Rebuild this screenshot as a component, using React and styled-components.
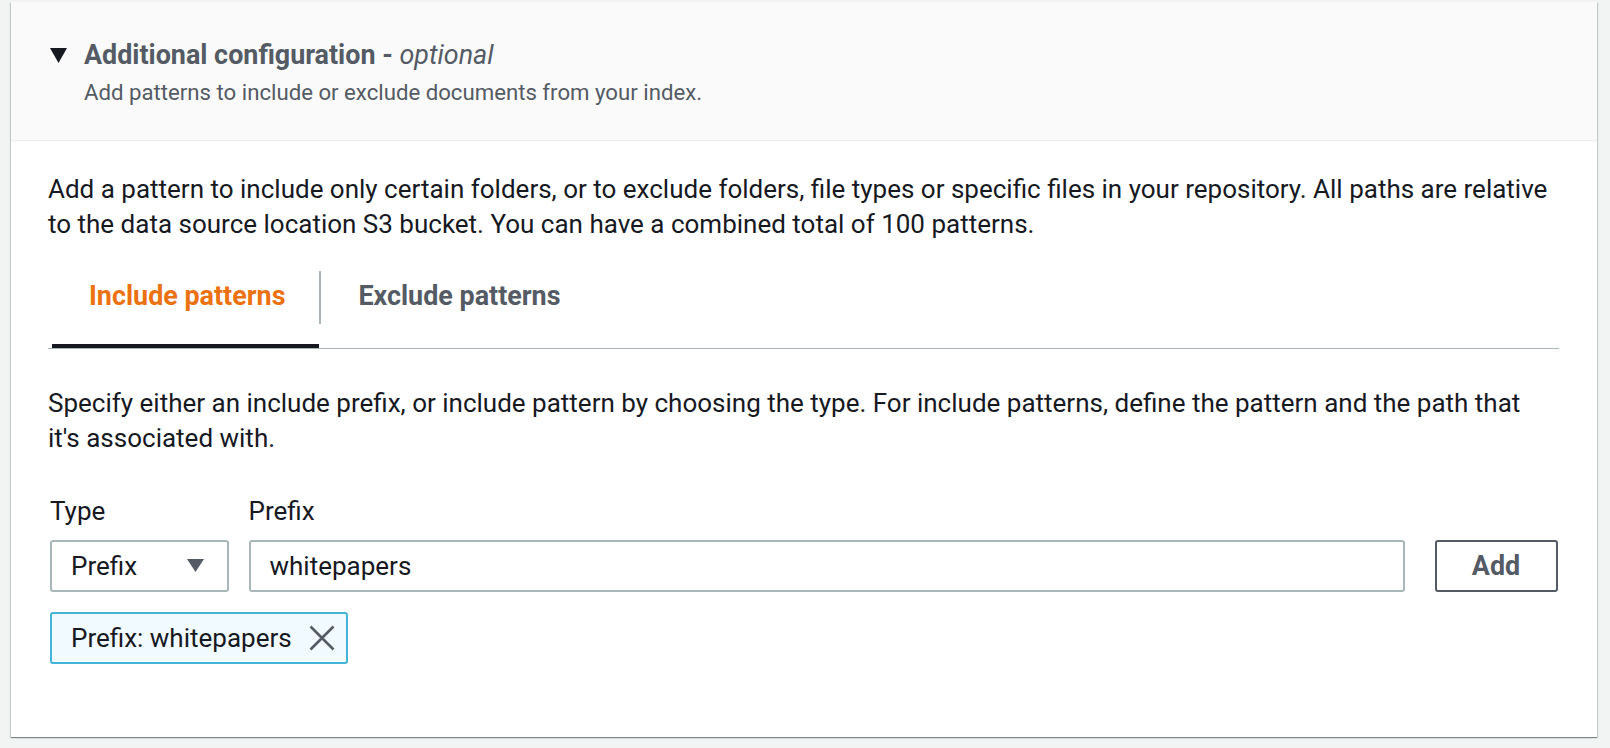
import React from 'react';
import styled, { createGlobalStyle } from 'styled-components';

const GlobalStyle = createGlobalStyle`
  html, body {
    margin: 0;
    padding: 0;
    background: #f2f3f3;
  }
  body {
    font-family: Roboto, "Liberation Sans", Arial, sans-serif;
    color: #16191f;
  }
`;

const Page = styled.div`
  padding: 2px 13px 10px 11px;
`;

const Panel = styled.section`
  background: #fff;
  box-shadow: 0 1px 1px 0 rgba(0, 28, 36, 0.3), 1px 1px 1px 0 rgba(0, 28, 36, 0.15),
    -1px 1px 1px 0 rgba(0, 28, 36, 0.15);
`;

const Header = styled.div`
  background: #fafafa;
  border-bottom: 1px solid #eaeded;
  padding: 35.5px 39px 32px;
`;

const HeaderRow = styled.div`
  display: flex;
  align-items: center;
  gap: 17px;
`;

const Title = styled.h2`
  margin: 0;
  font-size: 26.9px;
  line-height: 35px;
  font-weight: 700;
  color: #545b64;
`;

const Optional = styled.i`
  font-weight: 400;
`;

const HeaderDesc = styled.div`
  margin: 3.5px 0 0 34px;
  font-size: 22.2px;
  line-height: 32px;
  color: #545b64;
`;

const Body = styled.div`
  padding: 30.5px 38px 73px 37px;
`;

const Para = styled.p`
  margin: ${(p) => p.$top || 0}px 0 0;
  padding-right: 4px;
  font-size: 26px;
  line-height: 35px;
`;

const TabBar = styled.div`
  display: flex;
  margin-top: 29px;
  padding-left: 4px;
  border-bottom: 1px solid #aab7b8;
`;

const Tab = styled.button`
  border: none;
  background: none;
  padding: 8px 34px 30px 37px;
  border-bottom: 4px solid ${(p) => (p.$active ? '#16191f' : 'transparent')};
  font-family: inherit;
  font-size: 26.9px;
  line-height: 35px;
  font-weight: 700;
  color: ${(p) => (p.$active ? '#ec7211' : '#545b64')};
  cursor: pointer;
`;

const TabDivider = styled.span`
  align-self: flex-start;
  width: 2px;
  height: 53px;
  background: #aab7b8;
`;

const FieldRow = styled.div`
  display: flex;
  align-items: flex-end;
  gap: 19.5px;
  margin-top: 38px;
  padding: 0 1.5px 0 2px;
`;

const Field = styled.div`
  display: flex;
  flex-direction: column;
  gap: 11px;
  flex: ${(p) => (p.$grow ? 1 : 'none')};
  width: ${(p) => (p.$width ? `${p.$width}px` : 'auto')};
`;

const Label = styled.label`
  font-size: 26px;
  line-height: 35px;
`;

const Select = styled.div`
  box-sizing: border-box;
  height: 52px;
  display: flex;
  align-items: center;
  justify-content: space-between;
  padding: 0 23px 0 19px;
  border: 2px solid #aab7b8;
  border-radius: 3px;
  font-size: 26px;
`;

const Input = styled.input`
  box-sizing: border-box;
  height: 52px;
  width: 100%;
  padding: 0 19px;
  border: 2px solid #aab7b8;
  border-radius: 3px;
  font-family: inherit;
  font-size: 26px;
  color: #16191f;
  outline: none;
`;

const AddButton = styled.button`
  box-sizing: border-box;
  width: 123px;
  height: 52px;
  margin-left: 10px;
  border: 2px solid #545b64;
  border-radius: 3px;
  background: #fff;
  font-family: inherit;
  font-size: 26.9px;
  font-weight: 700;
  color: #545b64;
  cursor: pointer;
`;

const Token = styled.div`
  box-sizing: border-box;
  display: inline-flex;
  align-items: center;
  gap: 17px;
  height: 52px;
  margin: 20px 0 0 2px;
  padding: 0 11px 0 19px;
  border: 2px solid #44b4da;
  border-radius: 3px;
  background: #f1faff;
  font-size: 26px;
`;

const CloseButton = styled.button`
  display: flex;
  padding: 0;
  border: none;
  background: none;
  cursor: pointer;
`;

const Caret = ({ w, h, color }) => (
  <svg width={w} height={h} viewBox={`0 0 ${w} ${h}`}>
    <polygon points={`0,0 ${w},0 ${w / 2},${h}`} fill={color} />
  </svg>
);

const CloseIcon = () => (
  <svg width="26" height="26" viewBox="0 0 26 26">
    <path d="M1.5 1.5 L24.5 24.5 M24.5 1.5 L1.5 24.5" stroke="#545b64" strokeWidth="2.6" fill="none" />
  </svg>
);

export default function App() {
  return (
    <>
      <GlobalStyle />
      <Page>
        <Panel>
          <Header>
            <HeaderRow>
              <Caret w={17} h={15} color="#16191f" />
              <Title>
                Additional configuration - <Optional>optional</Optional>
              </Title>
            </HeaderRow>
            <HeaderDesc>Add patterns to include or exclude documents from your index.</HeaderDesc>
          </Header>
          <Body>
            <Para>
              Add a pattern to include only certain folders, or to exclude folders, file types or specific
              files in your repository. All paths are relative to the data source location S3 bucket. You
              can have a combined total of 100 patterns.
            </Para>
            <TabBar>
              <Tab $active>Include patterns</Tab>
              <TabDivider />
              <Tab>Exclude patterns</Tab>
            </TabBar>
            <Para $top={37}>
              Specify either an include prefix, or include pattern by choosing the type. For include
              patterns, define the pattern and the path that it's associated with.
            </Para>
            <FieldRow>
              <Field $width={179}>
                <Label>Type</Label>
                <Select>
                  Prefix
                  <Caret w={17} h={13} color="#545b64" />
                </Select>
              </Field>
              <Field $grow>
                <Label>Prefix</Label>
                <Input defaultValue="whitepapers" />
              </Field>
              <AddButton>Add</AddButton>
            </FieldRow>
            <Token>
              Prefix: whitepapers
              <CloseButton aria-label="Remove">
                <CloseIcon />
              </CloseButton>
            </Token>
          </Body>
        </Panel>
      </Page>
    </>
  );
}
